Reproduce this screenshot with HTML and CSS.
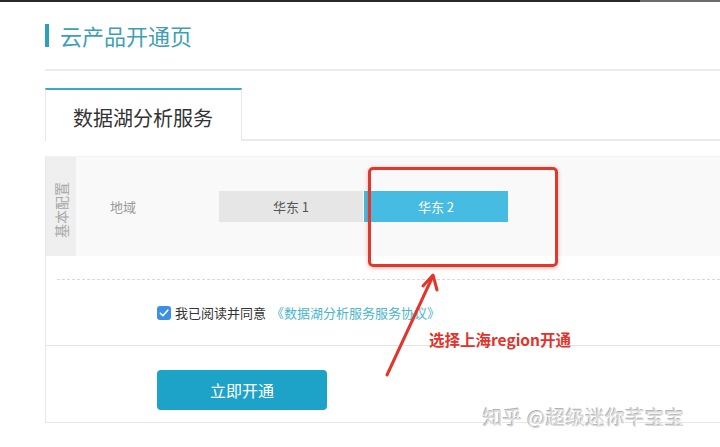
FILE: index.html
```html
<!DOCTYPE html>
<html lang="zh-CN">
<head>
<meta charset="utf-8">
<title>云产品开通页</title>
<link rel="stylesheet" href="styles.css">
</head>
<body>
<div class="topbar"></div>
<div class="page">
  <header class="header">
    <span class="title-mark"></span>
    <h1 class="title">云产品开通页</h1>
  </header>
  <nav class="tabs">
    <div class="tab active">数据湖分析服务</div>
    <div class="tab-fill"></div>
  </nav>
  <section class="panel">
    <div class="config-row">
      <div class="side"><span class="side-text">基本配置</span></div>
      <div class="label">地域</div>
      <div class="regions">
        <div class="region">华东 1</div>
        <div class="region selected">华东 2</div>
      </div>
    </div>
    <div class="dashed"></div>
    <div class="agree-row">
      <span class="checkbox"><svg width="14" height="14" viewBox="0 0 14 14"><path d="M3.3 7.2 L5.9 9.8 L10.8 4.2" fill="none" stroke="#fff" stroke-width="1.6" stroke-linecap="round" stroke-linejoin="round"/></svg></span>
      <span class="agree-text">我已阅读并同意</span>
      <span class="agree-link">《数据湖分析服务服务协议》</span>
    </div>
    <div class="submit-row">
      <button class="submit">立即开通</button>
    </div>
  </section>
</div>

<div class="highlight"></div>
<svg class="arrow" width="720" height="447" viewBox="0 0 720 447">
  <path d="M387 375 L432 278" stroke="#e2352b" stroke-width="3" stroke-linecap="round" fill="none"/>
  <path d="M423 286 L433 275 L437 290" stroke="#e2352b" stroke-width="3" stroke-linecap="round" stroke-linejoin="round" fill="none"/>
</svg>
<div class="note">选择上海region开通</div>
<div class="watermark">知乎 @超级迷你芊宝宝</div>
</body>
</html>
```

FILE: styles.css
```css
* { box-sizing: border-box; }
html, body { margin: 0; padding: 0; background: #fff; }
body {
  width: 720px;
  height: 447px;
  overflow: hidden;
  position: relative;
  font-family: "Noto Sans CJK SC", "Noto Sans", sans-serif;
  color: #333;
}
.topbar {
  height: 2px;
  background: linear-gradient(to right, #2a2a2c 0, #2a2a2c 640px, #6b6b6b 640px, #6b6b6b 720px);
}
.page { padding-left: 45px; }
.header {
  display: flex;
  align-items: center;
  gap: 11px;
  margin-top: 22px;
  padding-bottom: 22px;
  border-bottom: 2px solid #ececec;
}
.title-mark {
  width: 4px;
  height: 23px;
  background: #2aa0bb;
}
.title {
  margin: 0;
  font-size: 22px;
  line-height: 22px;
  font-weight: 400;
  color: #3f9fb7;
  position: relative;
  top: -1px;
}
.tabs {
  display: flex;
  margin-top: 17px;
  height: 53px;
}
.tab {
  width: 197px;
  border-top: 2px solid #3aa9c2;
  border-left: 1px solid #e8e8e8;
  border-right: 1px solid #e8e8e8;
  font-size: 20px;
  line-height: 20px;
  color: #333;
  padding: 18px 0 0 27px;
}
.tab-fill {
  flex: 1;
  border-bottom: 2px solid #ebebeb;
}
.panel {
  margin-top: 15px;
  border-top: 1px solid #f2f2f2;
  border-left: 1px solid #e8e8e8;
  border-bottom: 1px solid #e6e6e6;
}
.config-row {
  display: flex;
  align-items: center;
  height: 99px;
  background: #f9f9f9;
}
.side {
  width: 30px;
  height: 100%;
  background: #efefef;
  display: flex;
  align-items: center;
  justify-content: center;
}
.side-text {
  display: block;
  white-space: nowrap;
  transform: translateY(3px) rotate(-90deg);
  font-size: 14px;
  color: #a8a8a8;
}
.label {
  width: 143px;
  padding-left: 34px;
  font-size: 13px;
  color: #999;
}
.regions {
  display: flex;
  gap: 1px;
}
.region {
  width: 144px;
  height: 31px;
  display: flex;
  align-items: center;
  justify-content: center;
  font-size: 13px;
  background: #e6e6e6;
  color: #555;
}
.region.selected {
  background: #47bce2;
  color: #fff;
}
.dashed {
  margin: 23px 0 0 11px;
  border-top: 1px dashed #d9d9d9;
}
.agree-row {
  height: 66px;
  display: flex;
  align-items: center;
  padding-left: 111px;
  font-size: 13px;
  border-bottom: 1px solid #e4e4e4;
}
.checkbox {
  width: 14px;
  height: 14px;
  border-radius: 3px;
  background: #3d8fe3;
  display: flex;
  margin-right: 4px;
}
.agree-text { color: #333; margin-right: 5px; }
.agree-link { color: #4ab6c9; }
.submit-row {
  padding: 24px 0 12px 111px;
}
.submit {
  display: block;
  width: 170px;
  height: 40px;
  border: 0;
  border-radius: 4px;
  background: #1ea3c8;
  color: #fff;
  font-family: inherit;
  font-size: 16px;
}
.highlight {
  position: absolute;
  left: 368px;
  top: 167px;
  width: 190px;
  height: 100px;
  border: 3px solid #e2382c;
  border-radius: 5px;
  box-shadow: 0 1px 4px rgba(180, 40, 30, 0.35);
}
.arrow {
  position: absolute;
  left: 0;
  top: 0;
}
.note {
  position: absolute;
  left: 429px;
  top: 329px;
  font-size: 15.5px;
  line-height: 20px;
  font-weight: 700;
  color: #e0342c;
}
.watermark {
  position: absolute;
  left: 483px;
  top: 405px;
  font-size: 19.5px;
  line-height: 24px;
  color: #dadada;
  text-shadow: 1px 1px 0 #fff, -1px -1px 0 #b4b4b4;
  letter-spacing: 0.3px;
}
```
